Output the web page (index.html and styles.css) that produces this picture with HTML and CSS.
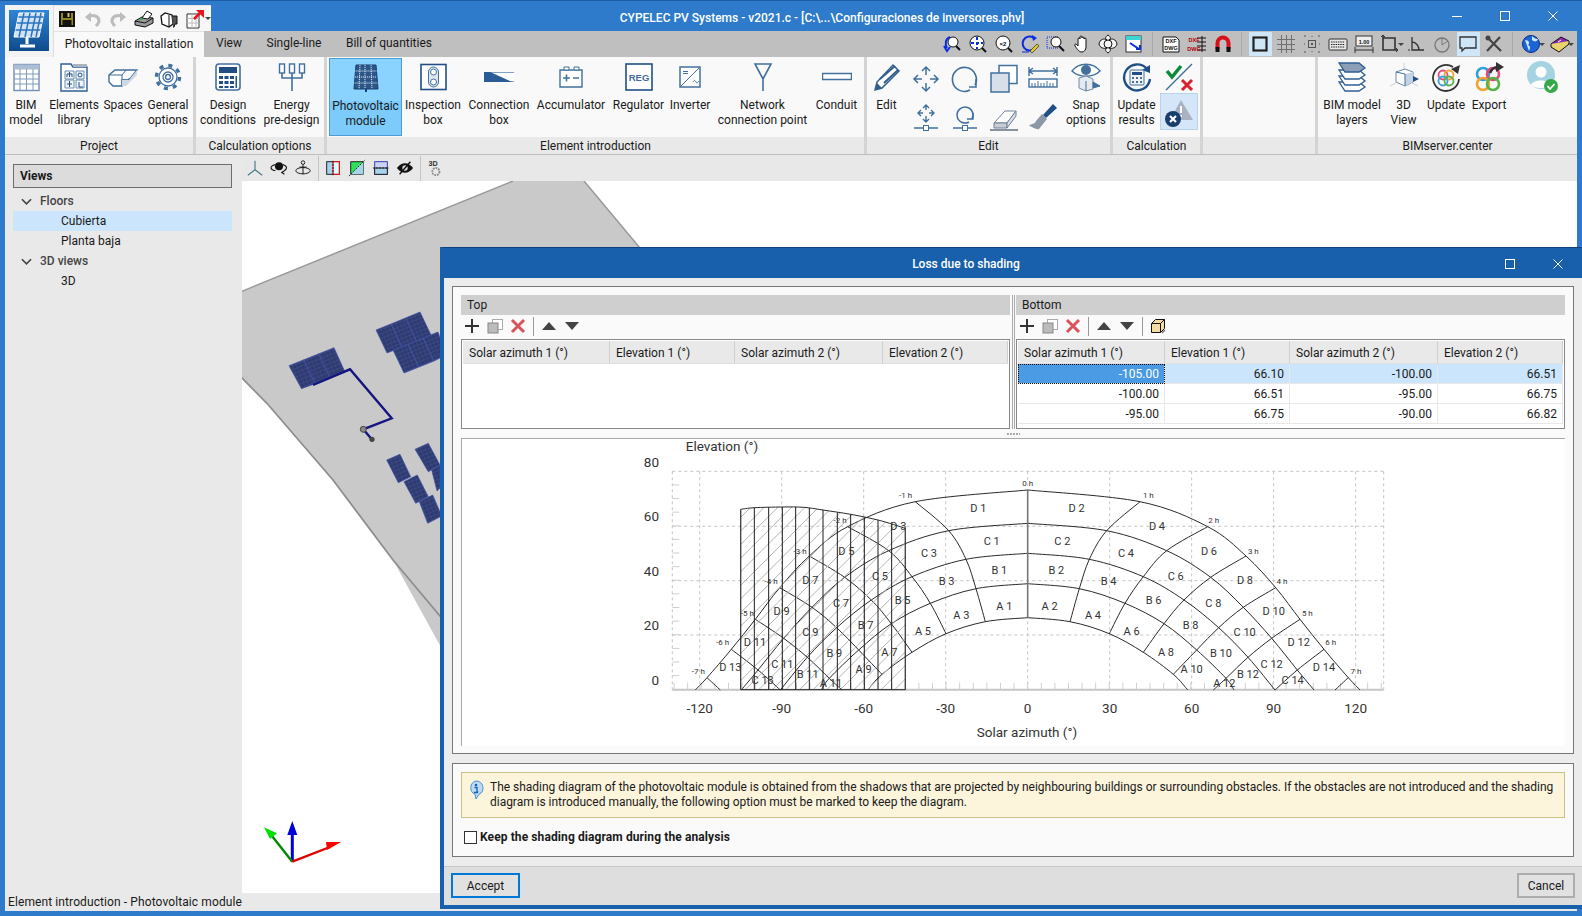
FILE: index.html
```html
<!DOCTYPE html>
<html lang="en">
<head>
<meta charset="utf-8">
<title>CYPELEC PV Systems</title>
<link rel="stylesheet" href="styles.css">
</head>
<body>
<div class="app">
  <div class="logo-box">
    <svg width="40" height="41" viewBox="0 0 40 41"><defs><linearGradient id="lg" x1="0" y1="0" x2="0" y2="1"><stop offset="0" stop-color="#2f86d6"/><stop offset="1" stop-color="#0e4a8c"/></linearGradient></defs><rect width="40" height="41" fill="url(#lg)"/><path d="M10 3h25l-5 24H5z" fill="#cfe3f5" stroke="#fff"/><path d="M6.500 20h25M8 13h25M9.500 7h25M15 3l-5 24M21 3l-5 24M27 3l-5 24M32 3l-5 24" stroke="#2b74bd" stroke-width="1.500"/><path d="M18 27v7M11 36h15" stroke="#fff" stroke-width="3"/></svg>
  </div>
  <header class="titlebar">
    <div class="qat">
      <svg class="t" viewBox="0 0 20 20"><path d="M3 3h14v14H3z" fill="#8f8a1e" stroke="#111" stroke-width="2"/><rect x="6" y="3" width="8" height="6" fill="#111"/><rect x="10.500" y="4" width="2" height="4" fill="#d8c84a"/><rect x="5.500" y="11" width="9" height="6" fill="#111"/></svg>
      <svg class="t" viewBox="0 0 20 20"><path d="M5 8c5-3 11-1 11 4 0 2-1 3-3 5" fill="none" stroke="#bcbcbc" stroke-width="3"/><path d="M8 3v10L2 8z" fill="#bcbcbc"/></svg>
      <svg class="t" viewBox="0 0 20 20"><path d="M15 8c-5-3-11-1-11 4 0 2 1 3 3 5" fill="none" stroke="#bcbcbc" stroke-width="3"/><path d="M12 3v10l6-5z" fill="#bcbcbc"/></svg>
      <svg class="t" viewBox="0 0 20 20"><path d="M1 12l7-4 11 1v5l-8 4-10-2z" fill="#999" stroke="#111"/><path d="M8 9l5-7 5 3-4 5z" fill="#fff" stroke="#111"/><path d="M1 12l10 2 8-5" fill="none" stroke="#111"/><path d="M6 10h3" stroke="#2bb04a" stroke-width="1.500"/></svg>
      <svg class="t" viewBox="0 0 20 20"><path d="M2 7l4-3 7 2 1 9-4 3-7-3z" fill="#fff" stroke="#111" stroke-width="1.300"/><path d="M10 6v12M13 7h5v8h-2l-1 3h-1" fill="#555" stroke="#111"/></svg>
      <svg class="t" viewBox="0 0 20 20"><path d="M2 5h12v14H2z" fill="#fff" stroke="#333"/><path d="M2 9.500h12M2 14h12M7 5v14M11 5v14" stroke="#bbb"/><path d="M9 10l6-6" stroke="#e8141c" stroke-width="2.500"/><path d="M11 1h8v8z" fill="#e8141c"/></svg>
      <span class="drop dk"></span>
    </div>
    <div class="win-title">CYPELEC PV Systems - v2021.c - [C:\...\Configuraciones de inversores.phv]</div>
    <div class="win-ctrl">
      <span class="wc"><svg width="12" height="12" viewBox="0 0 12 12"><path d="M1 6.500h10" stroke="#fff"/></svg></span>
      <span class="wc"><svg width="12" height="12" viewBox="0 0 12 12"><rect x="1.500" y="1.500" width="9" height="9" fill="none" stroke="#fff"/></svg></span>
      <span class="wc"><svg width="12" height="12" viewBox="0 0 12 12"><path d="M1.500 1.500l9 9M10.500 1.500l-9 9" stroke="#fff"/></svg></span>
    </div>
  </header>

  <nav class="tabs">
    <div class="tab active">Photovoltaic installation</div>
    <div class="tab view">View</div>
    <div class="tab single">Single-line</div>
    <div class="tab bill">Bill of quantities</div>
    <div class="tab-tools">
      <svg class="t" viewBox="0 0 20 20"><circle cx="11" cy="8" r="5" fill="#fff" stroke="#111"/><path d="M14 12l4 4" stroke="#111" stroke-width="2"/><path d="M8 3C3 5 3 10 5 14M2 12l3 5 3-4" fill="none" stroke="#0b2de0" stroke-width="2"/></svg>
      <svg class="t" viewBox="0 0 20 20"><circle cx="9" cy="9" r="7" fill="#fff" stroke="#111"/><path d="M9 3v12M3 9h12" stroke="#0b2de0" stroke-width="2" stroke-dasharray="3 2"/><path d="M14 14l4 4" stroke="#111" stroke-width="2"/></svg>
      <svg class="t" viewBox="0 0 20 20"><circle cx="9" cy="9" r="7" fill="#fff" stroke="#111"/><text x="9" y="12" class="svt" text-anchor="middle">×2</text><path d="M14 14l4 4" stroke="#111" stroke-width="2"/></svg>
      <svg class="t" viewBox="0 0 20 20"><path d="M15 5a7 7 0 1 0-1 10" fill="none" stroke="#0b2de0" stroke-width="2"/><path d="M12 1l5 3-4 3z" fill="#0b2de0"/><path d="M10 17l7-7 2 2-7 7z" fill="#e8c92c" stroke="#111" stroke-width=".6"/><path d="M2 18h7" stroke="#0b2de0"/></svg>
      <svg class="t" viewBox="0 0 20 20"><rect x="1" y="3" width="11" height="11" fill="none" stroke="#0b2de0" stroke-dasharray="1 1"/><circle cx="10" cy="8" r="5" fill="#fff" stroke="#111"/><path d="M13 12l5 5" stroke="#111" stroke-width="2"/></svg>
      <svg class="t" viewBox="0 0 20 20"><path d="M6 11V5a1 1 0 0 1 2 0V3a1 1 0 0 1 2 0v1a1 1 0 0 1 2 0v1a1 1 0 0 1 2 0v8c0 3-2 5-4 5-3 0-4-2-7-6-1-2 1-3 3 0z" fill="#fff" stroke="#111"/></svg>
      <svg class="t" viewBox="0 0 20 20"><path d="M10 1c3 2 3 4 1 5 3-2 7-1 8 4-1 4-5 5-8 4 2 1 2 3-1 5-3-2-3-4-1-5-3 1-7 0-8-4 1-5 5-6 8-4-2-1-2-3 1-5z" fill="#f4f4f4" stroke="#111"/><circle cx="10" cy="10" r="4" fill="none" stroke="#111"/></svg>
      <svg class="t" viewBox="0 0 20 20"><rect x="2" y="2" width="15" height="16" fill="#fff" stroke="#333"/><rect x="2" y="2" width="15" height="4" fill="#3ad6d6"/><path d="M6 9l9 6M12 15h4v-4" fill="none" stroke="#0b2de0" stroke-width="2"/></svg>
      <i class="tsep"></i>
      <svg class="t" viewBox="0 0 20 20"><path d="M2 3h13l3 3v12H2z" fill="#fff" stroke="#111"/><text x="10" y="9" class="svt sm" text-anchor="middle">DXF</text><text x="10" y="16" class="svt sm" text-anchor="middle">DWG</text></svg>
      <svg class="t" viewBox="0 0 20 20"><path d="M10 4h9M10 8h9M10 12h9M10 16h9M15 2v16" stroke="#111"/><text x="7" y="8" class="svt sm red" text-anchor="middle">DXF</text><text x="7" y="17" class="svt sm red" text-anchor="middle">DWG</text></svg>
      <svg class="t" viewBox="0 0 20 20"><path d="M4.500 15V9a5.500 5.500 0 0 1 11 0v6" fill="none" stroke="#d8101a" stroke-width="4"/><path d="M2.500 13h4v5h-4zM13.500 13h4v5h-4z" fill="#111"/></svg>
      <i class="tsep"></i>
      <span class="tw on"><svg class="t" viewBox="0 0 20 20"><rect x="3.500" y="3.500" width="13" height="13" fill="none" stroke="#222" stroke-width="2.200"/></svg></span>
      <svg class="t" viewBox="0 0 20 20"><path d="M5.500 1v18M10.500 1v18M15.500 1v18M1 5.500h18M1 10.500h18M1 15.500h18" stroke="#707070"/></svg>
      <svg class="t" viewBox="0 0 20 20"><rect x="6.500" y="6.500" width="7" height="7" fill="none" stroke="#555"/><circle cx="10" cy="10" r="1" fill="#333"/><path d="M2 2h2M16 2h2M2 18h2M16 18h2M2 10h1M17 10h1M10 2v1M10 17v1" stroke="#555"/></svg>
      <svg class="t" viewBox="0 0 20 20"><rect x="1" y="5" width="18" height="11" rx="1" fill="#e8e8e8" stroke="#333"/><path d="M3 8h14M3 10.500h14M3 13h14" stroke="#222" stroke-dasharray="1.500 .8"/></svg>
      <svg class="t" viewBox="0 0 20 20"><rect x="2" y="2" width="16" height="10" fill="#eee" stroke="#333"/><text x="10" y="10" class="svt sm" text-anchor="middle">1.00</text><path d="M1 16h18M1 13v6M19 13v6" stroke="#333"/></svg>
      <span class="tw drp"><svg class="t" viewBox="0 0 20 20"><path d="M3 1v15h15M3 4h12v12" fill="none" stroke="#333" stroke-width="1.600"/><path d="M1 3l2-2 2 2M16 14l2 2-2 2" fill="none" stroke="#333"/></svg><span class="drop"></span></span>
      <svg class="t" viewBox="0 0 20 20"><path d="M6 3v13h12M6 8c4 0 7 4 7 8" fill="none" stroke="#333" stroke-width="1.300"/><path d="M2 16h2" stroke="#333"/></svg>
      <svg class="t" viewBox="0 0 20 20"><circle cx="10" cy="11" r="7" fill="none" stroke="#777" stroke-width="1.300"/><path d="M10 11l6-4M10 11V4" stroke="#777"/></svg>
      <span class="tw on"><svg class="t" viewBox="0 0 20 20"><path d="M2 3h16v11H7l-3 3v-3H2z" fill="none" stroke="#333" stroke-width="1.300"/></svg></span>
      <svg class="t" viewBox="0 0 20 20"><path d="M4 4l13 13M16 3L3 17" stroke="#444" stroke-width="2.200"/><circle cx="4" cy="4" r="2.500" fill="#444"/></svg>
      <i class="tsep"></i>
      <span class="tw drp"><svg class="t" viewBox="0 0 20 20"><circle cx="10" cy="10" r="8.500" fill="#1c65d8" stroke="#0c2e80"/><path d="M4 6c4 0 5 3 3 5 3 1 2 4 1 6M11 2c2 2 3 3 6 3-1 3-4 3-6 1" fill="#cfe8ff"/></svg><span class="drop"></span></span>
      <span class="tw drp"><svg class="t" viewBox="0 0 20 20"><path d="M1 10l10-7 8 4-10 8z" fill="#8a2bb0" stroke="#111"/><path d="M1 10v3l8 5 10-8V7" fill="#e8d36c" stroke="#111"/><path d="M8 8l3-2" stroke="#fff"/></svg><span class="drop"></span></span>
    </div>
  </nav>

  <section class="ribbon">
    <div class="rgroup g-project">
      <div class="ritems">
        <div class="ri w42"><svg class="ic" viewBox="0 0 30 30"><rect x="3" y="2.500" width="25" height="26" fill="#fff" stroke="#6d8fb4" stroke-width="1.400"/><rect x="3" y="2.500" width="25" height="5" fill="#aebed2"/><path d="M3 12h25M3 17h25M3 22h25M9 7v21M15.500 7v21M22 7v21" stroke="#7d9bbc"/></svg><span>BIM<br>model</span></div>
        <div class="ri w54"><svg class="ic" viewBox="0 0 30 30"><path d="M2 29V2h10l2 3h14v24z" fill="#fff" stroke="#2f5f95" stroke-width="1.400"/><path d="M14 2h14v3H14z" fill="#aab4c0"/><path d="M6 9h9v8H6zM17 9h8v8h-8zM6 18h9v8H6zM17 18h8v8h-8z" fill="#f0f4f8" stroke="#6d8fb4"/><path d="M8 15v-3h5v3M10.500 10v5M19 13a2 2 0 1 1 4 0 2 2 0 1 1-4 0M8 22h5M10.500 19v6M20 20v5h4" fill="none" stroke="#224f83"/></svg><span>Elements<br>library</span></div>
        <div class="ri w44"><svg class="ic" viewBox="0 0 30 30"><path d="M1 13l6-5h22l-8 10h-7v6H5l-4-4z" fill="#fff" stroke="#3f6d9e" stroke-width="1.400"/><path d="M1 13h13v11M14 18l7 0M21 18v-2M14 13l4-5" fill="none" stroke="#3f6d9e"/><path d="M14 18h7l8-10v5l-11 11h-4z" fill="#cfd9e6"/></svg><span>Spaces</span></div>
        <div class="ri w46"><svg class="ic" viewBox="0 0 30 30"><circle cx="15" cy="15" r="11.500" fill="none" stroke="#41709f" stroke-width="3.500" stroke-dasharray="4 5.030"/><circle cx="15" cy="15" r="9" fill="#fff" stroke="#41709f" stroke-width="1.300"/><circle cx="15" cy="15" r="5" fill="none" stroke="#41709f" stroke-width="1.300"/><circle cx="15" cy="15" r="2.500" fill="none" stroke="#41709f" stroke-width="1.300"/></svg><span>General<br>options</span></div>
      </div>
      <div class="rlabel">Project</div>
    </div>
    <div class="rgroup g-calcopt">
      <div class="ritems">
        <div class="ri w64"><svg class="ic" viewBox="0 0 30 30"><rect x="3" y="2" width="24" height="26" rx="3" fill="#fff" stroke="#41709f" stroke-width="1.600"/><rect x="6" y="5" width="18" height="6" fill="#204f86"/><path d="M6 14h4v3H6zM11.500 14h4v3h-4zM17 14h4v3h-4zM6 19h4v3H6zM11.500 19h4v3h-4zM17 19h4v3h-4zM6 24h4v2H6zM11.500 24h4v2h-4zM17 24h4v2h-4zM22.500 14H24v12h-1.500z" fill="#204f86"/></svg><span>Design<br>conditions</span></div>
        <div class="ri w63"><svg class="ic" viewBox="0 0 30 30"><path d="M15 29V16M5 11v5h20v-5M15 11v5" fill="none" stroke="#41709f" stroke-width="1.600"/><rect x="2.500" y="2" width="5" height="9" fill="#fff" stroke="#41709f" stroke-width="1.400"/><rect x="12.500" y="2" width="5" height="9" fill="#fff" stroke="#41709f" stroke-width="1.400"/><rect x="22.500" y="2" width="5" height="9" fill="#fff" stroke="#41709f" stroke-width="1.400"/></svg><span>Energy<br>pre-design</span></div>
      </div>
      <div class="rlabel">Calculation options</div>
    </div>
    <div class="rgroup g-elem">
      <div class="ritems">
        <div class="ri w73 sel"><svg class="ic" viewBox="0 0 30 30"><path d="M5 2h20l2 24H3z" fill="#2d5688" stroke="#173e6d"/><path d="M4.500 8h21M4 14h22M3.500 20h23M9 2L8 26M14 2v24M20 2l1 24" stroke="#d3e4f4" stroke-dasharray="1.200 .8"/><path d="M15 26v3" stroke="#17406f" stroke-width="2"/></svg><span>Photovoltaic<br>module</span></div>
        <div class="ri w62"><svg class="ic" viewBox="0 0 30 30"><rect x="3" y="2.500" width="25" height="25" fill="#fff" stroke="#204f86" stroke-width="1.600"/><rect x="10.500" y="5" width="10" height="20" rx="5" fill="#dfe6ee" stroke="#41709f"/><circle cx="15.500" cy="10" r="3" fill="#fff" stroke="#41709f"/><circle cx="15.500" cy="20" r="3" fill="#fff" stroke="#41709f"/></svg><span>Inspection<br>box</span></div>
        <div class="ri w70"><svg class="ic" viewBox="0 0 30 30"><rect x="0.500" y="10.500" width="30" height="9" fill="#fff" stroke="#7fa0c4"/><path d="M0 10v10h28L6 10z" fill="#2a5d98"/></svg><span>Connection<br>box</span></div>
        <div class="ri w74"><svg class="ic" viewBox="0 0 30 30"><path d="M4 8h22v17H4z" fill="#fff" stroke="#41709f" stroke-width="1.400"/><path d="M8 5h5v3H8zM18 5h5v3h-5z" fill="#fff" stroke="#41709f"/><path d="M7 16h7M10.500 12.500v7M17 16h6" stroke="#41709f" stroke-width="1.600"/></svg><span>Accumulator</span></div>
        <div class="ri w61"><svg class="ic" viewBox="0 0 30 30"><rect x="2" y="2" width="26" height="26" fill="#fff" stroke="#204f86" stroke-width="1.600"/><text x="15" y="18.500" class="svt reg" text-anchor="middle">REG</text></svg><span>Regulator</span></div>
        <div class="ri w42"><svg class="ic" viewBox="0 0 30 30"><rect x="5" y="5" width="20" height="20" fill="#fff" stroke="#41709f" stroke-width="1.500"/><path d="M6 24L24 6M8 9.500h5M8 11.500h5M18 20c1-2 2-2 3 0s2 0 3-1" fill="none" stroke="#41709f"/></svg><span>Inverter</span></div>
        <div class="ri w103"><svg class="ic" viewBox="0 0 30 30"><path d="M7 2h16l-8 15zM15 17v12" fill="none" stroke="#41709f" stroke-width="1.600"/></svg><span>Network<br>connection point</span></div>
        <div class="ri w45"><svg class="ic" viewBox="0 0 30 30"><rect x="0.500" y="11.500" width="29" height="6" fill="#fff" stroke="#41709f" stroke-width="1.500"/></svg><span>Conduit</span></div>
      </div>
      <div class="rlabel">Element introduction</div>
    </div>
    <div class="rgroup g-edit">
      <div class="ritems">
        <div class="ri w39"><svg class="ic" viewBox="0 0 30 30"><path d="M3 28l2-8L21 3l6 6L10 26z" fill="#fff" stroke="#31608f" stroke-width="1.500"/><path d="M3 28l2-7 5 5z" fill="#31608f"/><path d="M8 17L23 4M12 21L26 8" stroke="#31608f" stroke-width="2"/></svg><span>Edit</span></div>
        <div class="egrid">
          <svg class="ic" viewBox="0 0 30 30"><path d="M15 3v24M3 15h24M11 7l4-4 4 4M11 23l4 4 4-4M7 11l-4 4 4 4M23 11l4 4-4 4" fill="none" stroke="#41709f" stroke-width="1.500"/><rect x="11" y="11" width="8" height="8" fill="#f9f9f9"/></svg>
          <svg class="ic" viewBox="0 0 30 30"><path d="M20 26a12 12 0 1 1 5-5" fill="none" stroke="#41709f" stroke-width="1.600"/><path d="M26 15v8h-7" fill="none" stroke="#41709f" stroke-width="1.500"/></svg>
          <svg class="ic" viewBox="0 0 30 30"><rect x="10" y="1.500" width="18" height="18" fill="#fff" stroke="#41709f" stroke-width="1.500"/><rect x="2" y="9" width="18" height="19" fill="#d9dfe8" stroke="#41709f" stroke-width="1.500"/></svg>
          <svg class="ic" viewBox="0 0 30 30"><path d="M1 7h28M1 3v9M29 3v9M5 4L1 7l4 3M25 4l4 3-4 3" fill="none" stroke="#41709f" stroke-width="1.400"/><rect x="1" y="15" width="28" height="8" fill="#fff" stroke="#41709f" stroke-width="1.400"/><path d="M4 19v4M7 19v4M10 17v6M13 19v4M16 19v4M19 17v6M22 19v4M25 19v4" stroke="#41709f"/></svg>
          <svg class="ic" viewBox="0 0 30 30"><path d="M15 3v17M7 11h16M12 6l3-3 3 3M12 17l3 3 3-3M10 8l-3 3 3 3M20 8l3 3-3 3M3 26h24" fill="none" stroke="#41709f" stroke-width="1.400"/><rect x="12" y="8" width="6" height="6" fill="#f9f9f9"/><rect x="12.500" y="23.500" width="5" height="5" fill="#fff" stroke="#41709f"/></svg>
          <svg class="ic" viewBox="0 0 30 30"><path d="M19 20a8 8 0 1 1 3-3" fill="none" stroke="#41709f" stroke-width="1.500"/><path d="M23 11v6h-6M3 26h24" fill="none" stroke="#41709f" stroke-width="1.400"/><rect x="12.500" y="23.500" width="5" height="5" fill="#fff" stroke="#41709f"/></svg>
          <svg class="ic" viewBox="0 0 30 30"><path d="M5 21L16 9h11l-9 12z" fill="#fff" stroke="#6f8096"/><path d="M5 21h13v5H5z" fill="#c9ced6" stroke="#6f8096"/><path d="M18 21l9-12v5l-9 12z" fill="#dde2e8" stroke="#6f8096"/><path d="M1 28h28" stroke="#8792a1" stroke-width="2"/></svg>
          <svg class="ic" viewBox="0 0 30 30"><path d="M15 13L25 2l4 4-11 10z" fill="#204f86"/><path d="M14 12l5 5-8 10c-2 1-8-2-10-4 3-1 6-1 7-4z" fill="#8c98a8"/></svg>
        </div>
        <div class="ri w48"><svg class="ic" viewBox="0 0 30 30"><path d="M1 9c7-9 21-9 28 0-7 7-21 7-28 0z" fill="#fff" stroke="#41709f" stroke-width="1.400"/><circle cx="15" cy="8" r="5" fill="#41709f"/><path d="M8 16l7-2 7 3v10l-7 2-7-3z" fill="#e5eaf0" stroke="#6f8aa8"/><path d="M15 19v10M22 20l7 4-7 2z" fill="#41709f" stroke="#41709f"/></svg><span>Snap<br>options</span></div>
      </div>
      <div class="rlabel">Edit</div>
    </div>
    <div class="rgroup g-calc">
      <div class="ritems">
        <div class="ri w47"><svg class="ic" viewBox="0 0 30 30"><path d="M25 7a13 13 0 1 0 3 10" fill="none" stroke="#204f86" stroke-width="2.400"/><path d="M20 8l8-5v8z" fill="#204f86"/><rect x="8" y="8" width="14" height="15" rx="1" fill="#f2f2f2" stroke="#41709f"/><path d="M10 10h10v3H10z" fill="#204f86"/><path d="M10 15h2v2h-2zM14 15h2v2h-2zM18 15h2v2h-2zM10 19h2v2h-2zM14 19h2v2h-2zM18 19h2v2h-2z" fill="#41709f"/></svg><span>Update<br>results</span></div>
        <div class="ecol">
          <svg class="ic" viewBox="0 0 30 30"><path d="M28 2L2 28" stroke="#41709f" stroke-width="1.500"/><path d="M3 9l5 6L17 4" fill="none" stroke="#0c8a3c" stroke-width="3.500"/><path d="M18 18l10 10M28 18L18 28" stroke="#d8202c" stroke-width="3"/></svg>
          <span class="warn"><svg class="ic" viewBox="0 0 30 30"><path d="M17 3l12 20H6z" fill="#a9b2c1"/><path d="M17 9v7M17 18v2" stroke="#fff" stroke-width="2"/><circle cx="9" cy="22" r="8" fill="#173e6d"/><path d="M6 19l6 6M12 19l-6 6" stroke="#fff" stroke-width="2.200"/></svg></span>
        </div>
      </div>
      <div class="rlabel">Calculation</div>
    </div>
    <div class="rgroup g-blank">
      <div class="ritems"></div>
      <div class="rlabel">&nbsp;</div>
    </div>
    <div class="rgroup g-bim">
      <div class="ritems">
        <div class="ri w68"><svg class="ic" viewBox="0 0 30 30"><path d="M2 20h20l6 5-6 4H8z" fill="#fff" stroke="#2f5f95" stroke-width="1.300"/><path d="M2 14h20l6 5-6 4H8z" fill="#fff" stroke="#2f5f95" stroke-width="1.300"/><path d="M2 8h20l6 5-6 4H8z" fill="#fff" stroke="#2f5f95" stroke-width="1.300"/><path d="M2 1h20l6 5-6 4H8z" fill="#8d9fb6" stroke="#2f5f95" stroke-width="1.300"/></svg><span>BIM model<br>layers</span></div>
        <div class="ri w35"><svg class="ic wide" viewBox="0 0 30 30"><path d="M15 1v6M1 24l6-3M29 24l-6-3" stroke="#cfcfcf"/><path d="M7 10l9-3 8 3v10l-8 4-9-4z" fill="#fff" stroke="#6f8aa8"/><path d="M16 12l8-2v10l-8 4z" fill="#c4d3e3"/><path d="M7 10l9 2v12" fill="none" stroke="#41709f"/><path d="M24 14l6 3-6 3z" fill="#204f86"/></svg><span>3D<br>View</span></div>
        <div class="ri w50"><svg class="ic" viewBox="0 0 30 30"><path d="M22 5A13 13 0 1 0 28 17" fill="none" stroke="#333" stroke-width="1.800"/><path d="M20 7l9-4-2 9z" fill="#333"/><circle cx="12" cy="13" r="4.500" fill="none" stroke="#e44a7c" stroke-width="1.800"/><circle cx="18" cy="13" r="4.500" fill="none" stroke="#f2a22e" stroke-width="1.800"/><circle cx="12" cy="19" r="4.500" fill="none" stroke="#3c9fdc" stroke-width="1.800"/><circle cx="18" cy="19" r="4.500" fill="none" stroke="#55b34a" stroke-width="1.800"/></svg><span>Update</span></div>
        <div class="ri w36"><svg class="ic" viewBox="0 0 30 30"><circle cx="9" cy="12" r="6" fill="none" stroke="#2f9fe0" stroke-width="2.600"/><circle cx="19" cy="12" r="6" fill="none" stroke="#e44a7c" stroke-width="2.600"/><circle cx="9" cy="22" r="6" fill="none" stroke="#f2a22e" stroke-width="2.600"/><circle cx="19" cy="22" r="6" fill="none" stroke="#55b34a" stroke-width="2.600"/><path d="M16 11c2-5 6-6 8-6" fill="none" stroke="#333" stroke-width="2.500"/><path d="M22 0l8 5-8 5z" fill="#333"/></svg><span>Export</span></div>
        <div class="ri w66"><svg class="ic lg" viewBox="0 0 34 34"><circle cx="16" cy="15" r="14" fill="#a6d3e2"/><circle cx="16" cy="12" r="5.500" fill="#fff"/><path d="M6 25c2-6 18-6 20 0-3 4-17 4-20 0z" fill="#fff"/><circle cx="26" cy="26" r="7" fill="#35a84a"/><path d="M22.500 26l2.500 3 4.500-5" fill="none" stroke="#fff" stroke-width="1.800"/></svg></div>
      </div>
      <div class="rlabel">BIMserver.center</div>
    </div>
  </section>

  <main class="workspace">
    <aside class="side">
      <div class="side-head">Views</div>
      <ul class="tree">
        <li class="node"><svg class="chev" viewBox="0 0 12 8"><path d="M1 1l5 5 5-5" fill="none" stroke="#444" stroke-width="1.800"/></svg>Floors</li>
        <li class="leaf cur">Cubierta</li>
        <li class="leaf">Planta baja</li>
        <li class="node"><svg class="chev" viewBox="0 0 12 8"><path d="M1 1l5 5 5-5" fill="none" stroke="#444" stroke-width="1.800"/></svg>3D views</li>
        <li class="leaf">3D</li>
      </ul>
    </aside>
    <div class="stage">
      <div class="vbar">
        <svg class="v" viewBox="0 0 20 20"><path d="M10 2v10M10 12l-8 6M10 12l8 6" stroke="#4a7a8c" fill="none" stroke-width="1.300"/></svg>
        <svg class="v" viewBox="0 0 20 20"><circle cx="10" cy="8" r="4.500" fill="#111"/><path d="M6 6c-7 2-6 6 0 7M14 6c6 2 5 5 2 7M16 13l-3 2 3 2" fill="none" stroke="#111" stroke-width="1.200"/></svg>
        <svg class="v" viewBox="0 0 20 20"><circle cx="10" cy="4" r="2" fill="none" stroke="#111"/><path d="M10 6v11M6 9h8" stroke="#111"/><ellipse cx="10" cy="13" rx="8" ry="3.500" fill="none" stroke="#111"/></svg>
        <i class="vsep"></i>
        <svg class="v" viewBox="0 0 20 20"><rect x="3" y="3" width="14" height="14" fill="#a9d3ea" stroke="#111"/><rect x="10" y="3" width="7" height="14" fill="#dff" stroke="#e01010" stroke-width="1.300"/><path d="M10 2v16" stroke="#111" stroke-dasharray="2 1.500"/></svg>
        <svg class="v" viewBox="0 0 20 20"><path d="M3 3h14v14H3z" fill="#2fe05c" stroke="#111"/><path d="M3 17L17 3v14z" fill="#a9d3ea"/><path d="M1 19L19 1" stroke="#111" stroke-dasharray="2 1.500"/></svg>
        <svg class="v" viewBox="0 0 20 20"><rect x="3" y="3" width="14" height="14" fill="#c9d4ef" stroke="#2828b0"/><rect x="3" y="10" width="14" height="7" fill="#a9d3ea" stroke="#111"/><path d="M1 10h18" stroke="#111" stroke-dasharray="2 1.500"/></svg>
        <svg class="v" viewBox="0 0 20 20"><path d="M1 10c5-7 13-7 18 0-5 7-13 7-18 0z" fill="#111"/><circle cx="10" cy="10" r="3" fill="#ddd"/><path d="M4 17L16 3" stroke="#111" stroke-width="1.500"/></svg>
        <i class="vsep"></i>
        <svg class="v" viewBox="0 0 20 20"><text x="8" y="8" class="svt b7" text-anchor="middle">3D</text><circle cx="11" cy="14" r="4" fill="none" stroke="#888" stroke-width="2" stroke-dasharray="2 1"/></svg>
      </div>
      <div class="canvas">
        <svg class="scene" viewBox="242 181 1335 712">
          <defs>
            <pattern id="pv" width="4" height="4" patternUnits="userSpaceOnUse" patternTransform="rotate(-22)"><rect width="4" height="4" fill="#2c3a70"/><path d="M0 .5h4M2 0v4" stroke="#47548f" stroke-width=".5"/></pattern>
          </defs>
          <path d="M240 292L513 181H584L700 320V700H470L393 560 333 480 266.700 403 240 376z" fill="#c9c9c9"/>
          <path d="M240 292L513 181M584 181L660 272" fill="none" stroke="#999" stroke-width="1.500"/>
          <path d="M240 376L266.700 403 333 480 393 560 445 622" fill="none" stroke="#8e8e8e" stroke-width="1.800"/>
          <g fill="url(#pv)" stroke="#3f4fa8" stroke-width=".7">
            <path d="M289 365.700l15-6 11 24-13.500 5z"/><path d="M304 359.700l15-6 11 24-15 6z"/><path d="M319 353.700l15-6 11 24.300-15 5.700z"/>
            <path d="M376 330l15-6 11 23-15 6z"/><path d="M391 324l14.500-6 11 23-14.500 6z"/><path d="M405.500 318l14.500-6 11 23-14.500 6z"/>
            <path d="M393 350l15-6 11 23-15 6z"/><path d="M408 344l15-6 11 23-15 6z"/><path d="M423 338l15-6 8 23-12 6z"/>
            <path d="M386.700 460l13.300-5.700 10.700 22.400-12.400 6z"/><path d="M404 481.700l13.300-6.700 11 21.700-12.600 6.600z"/><path d="M419.300 501.700l13.400-6.700 9 21-14 7.300z"/>
            <path d="M415 449.300l13.300-6 11.700 21.700-11.700 6.700z"/><path d="M431.700 470l8.300-5v23l-3 3z"/>
          </g>
          <path d="M313 385L350 369.300 391.700 418.300 363.300 429.300 371.700 439.300" fill="none" stroke="#15157f" stroke-width="2.400"/>
          <circle cx="363.300" cy="429.300" r="3" fill="#888" stroke="#444"/>
          <circle cx="372" cy="439.300" r="2.600" fill="#444"/>
          <path d="M292.300 861.700V830" stroke="#0000d8" stroke-width="3"/><path d="M292.300 821l5 14h-10z" fill="#0000d8"/>
          <path d="M292.300 861.700L272 836" stroke="#008a00" stroke-width="2.400"/><path d="M264 827.300l13 6-7 5.700z" fill="#00e000"/>
          <path d="M292.300 861.700L330 847" stroke="#e00000" stroke-width="2.400"/><path d="M341 842l-14 8-1-8z" fill="#ff0000"/>
        </svg>
      </div>
    </div>
  </main>
  <footer class="status">Element introduction - Photovoltaic module</footer>

  <section class="dialog">
    <div class="dlg-title">
      <span class="dlg-name">Loss due to shading</span>
      <span class="dc"><svg width="12" height="12" viewBox="0 0 12 12"><rect x="1.500" y="1.500" width="9" height="9" fill="none" stroke="#fff"/></svg></span>
      <span class="dc"><svg width="12" height="12" viewBox="0 0 12 12"><path d="M1.500 1.500l9 9M10.500 1.500l-9 9" stroke="#fff"/></svg></span>
    </div>
    <div class="dlg-body">
      <div class="panel main-panel">
        <div class="pane-row">
          <div class="pane">
            <div class="pane-head">Top</div>
            <div class="pane-tools">
              <svg class="b" viewBox="0 0 16 16"><path d="M8 1v14M1 8h14" stroke="#333" stroke-width="2"/></svg>
              <svg class="b" viewBox="0 0 16 16"><rect x="5.500" y="1.500" width="10" height="10" fill="#fff" stroke="#aaa"/><rect x="1" y="5" width="10" height="10" fill="#bbb" stroke="#888"/></svg>
              <svg class="b" viewBox="0 0 16 16"><path d="M2 2l12 12M14 2L2 14" stroke="#d8545a" stroke-width="3"/></svg>
              <i class="bsep"></i>
              <svg class="b" viewBox="0 0 16 16"><path d="M1 12L8 4l7 8z" fill="#444"/></svg>
              <svg class="b" viewBox="0 0 16 16"><path d="M1 4l7 8 7-8z" fill="#444"/></svg>
            </div>
            <div class="grid-box">
              <div class="grid">
                <div class="gh">Solar azimuth 1 (°)</div><div class="gh">Elevation 1 (°)</div><div class="gh">Solar azimuth 2 (°)</div><div class="gh">Elevation 2 (°)</div>
              </div>
            </div>
          </div>
          <div class="vsplit"></div>
          <div class="pane">
            <div class="pane-head">Bottom</div>
            <div class="pane-tools">
              <svg class="b" viewBox="0 0 16 16"><path d="M8 1v14M1 8h14" stroke="#333" stroke-width="2"/></svg>
              <svg class="b" viewBox="0 0 16 16"><rect x="5.500" y="1.500" width="10" height="10" fill="#fff" stroke="#aaa"/><rect x="1" y="5" width="10" height="10" fill="#bbb" stroke="#888"/></svg>
              <svg class="b" viewBox="0 0 16 16"><path d="M2 2l12 12M14 2L2 14" stroke="#d8545a" stroke-width="3"/></svg>
              <i class="bsep"></i>
              <svg class="b" viewBox="0 0 16 16"><path d="M1 12L8 4l7 8z" fill="#444"/></svg>
              <svg class="b" viewBox="0 0 16 16"><path d="M1 4l7 8 7-8z" fill="#444"/></svg>
              <i class="bsep"></i>
              <svg class="b" viewBox="0 0 16 16"><path d="M1.500 5.500l4-4h9v9l-4 4h-9z" fill="#f6dca0" stroke="#111"/><path d="M1.500 5.500h9v9M10.500 5.500l4-4" fill="none" stroke="#111"/><path d="M12 15l3-3" stroke="#777" stroke-width="1.500"/></svg>
            </div>
            <div class="grid-box">
              <div class="grid">
                <div class="gh">Solar azimuth 1 (°)</div><div class="gh">Elevation 1 (°)</div><div class="gh">Solar azimuth 2 (°)</div><div class="gh">Elevation 2 (°)</div>
                <div class="gc focus">-105.00</div><div class="gc hl">66.10</div><div class="gc hl">-100.00</div><div class="gc hl">66.51</div>
                <div class="gc">-100.00</div><div class="gc">66.51</div><div class="gc">-95.00</div><div class="gc">66.75</div>
                <div class="gc">-95.00</div><div class="gc">66.75</div><div class="gc">-90.00</div><div class="gc">66.82</div>
              </div>
            </div>
          </div>
        </div>
        <div class="hsplit"><i></i></div>
        <div class="chart" id="chart"></div>
      </div>
      <div class="panel opts-panel">
        <div class="info">
          <svg class="info-ic" viewBox="0 0 16 20"><path d="M8 1a7 7 0 0 1 3 13.300L8 19l-1-4.800A7 7 0 0 1 8 1z" fill="#bcdcf5" stroke="#4a90d0"/><circle cx="8" cy="5" r="1.300" fill="#1a5fae"/><path d="M6.500 7.500H9V12h1.200M6 12.500h4" fill="none" stroke="#1a5fae" stroke-width="1.300"/></svg>
          <p>The shading diagram of the photovoltaic module is obtained from the shadows that are projected by neighbouring buildings or surrounding obstacles. If the obstacles are not introduced and the shading<br>diagram is introduced manually, the following option must be marked to keep the diagram.</p>
        </div>
        <label class="check"><span class="box"></span>Keep the shading diagram during the analysis</label>
      </div>
    </div>
    <div class="dlg-foot">
      <button class="btn primary" type="button">Accept</button>
      <button class="btn" type="button">Cancel</button>
    </div>
  </section>
</div>
<script src="chart.js"></script>
</body>
</html>
```
FILE: styles.css
```css
* { box-sizing: border-box; }
html, body { margin: 0; padding: 0; }
body { width: 1582px; height: 916px; overflow: hidden; font: 12px/15px Roboto, "Liberation Sans", sans-serif; color: #1a1a1a; }
.app { position: relative; width: 1582px; height: 916px; background: #2e7bcb; padding: 0 5px 5px; display: flex; flex-direction: column; border-top: 1px solid #1a5ca6; overflow: hidden; }

.logo-box { position: absolute; left: 5px; top: 4px; width: 49px; height: 52px; background: #f3f3f3; padding: 5px 4px; z-index: 3; border-right: 1px solid #ddd; }
.logo-box svg { display: block; }

.titlebar { height: 30px; display: flex; align-items: flex-end; flex: none; }
.qat { margin-left: 49px; width: 157px; height: 26px; background: #f7f7f7; display: flex; align-items: center; padding: 0 0 0 3px; gap: 5.500px; border-top: 1px solid #e6e6e6; }
.t { width: 20px; height: 20px; flex: none; display: block; }
.drop { width: 0; height: 0; border-left: 3px solid transparent; border-right: 3px solid transparent; border-top: 3px solid #444; display: inline-block; }
.drop.dk { margin-left: -5px; }
.win-title { flex: 1; align-self: center; text-align: center; color: #fff; font-weight: 500; font-size: 12px; padding-top: 5px; }
.win-ctrl { width: 144px; height: 30px; display: flex; align-items: center; }
.wc { width: 48px; display: flex; justify-content: center; }

.tabs { height: 26px; background: #bfbfbf; display: flex; align-items: center; flex: none; padding-left: 49px; }
.tab { height: 26px; line-height: 24px; text-align: center; }
.tab.active { width: 150px; background: #f9f9f9; border-top: 1px solid #e2e2e2; }
.tab.view { width: 50px; }
.tab.single { width: 80px; }
.tab.bill { width: 110px; }
.tab-tools { margin-left: 498px; display: flex; align-items: center; height: 26px; gap: 6px; }
.tsep { width: 1px; height: 24px; background: #a9a9a9; margin: 0 2px; flex: none; }
.tw { display: flex; align-items: center; justify-content: center; height: 24px; width: 20px; flex: none; }
.tw.on { width: 23px; margin: 0 -1.500px; background: #cfe5f8; }
.tw.drp { width: 20px; position: relative; }
.tw.drp .drop { position: absolute; right: -4px; top: 11px; }
.tw.drp + .tw.drp { margin-left: 3px; }

.ribbon { height: 98px; display: flex; gap: 3px; background: #d4d4d4; flex: none; border-bottom: 1px solid #bdbdbd; }
.rgroup { display: flex; flex-direction: column; background: #f9f9f9; flex: none; }
.g-project { width: 188px; }
.g-calcopt { width: 128px; }
.g-elem { width: 537px; padding-left: 2px; }
.g-edit { width: 243px; }
.g-calc { width: 87px; }
.g-blank { width: 112px; }
.g-bim { width: 259px; }
.ritems { height: 80px; display: flex; flex: none; }
.rlabel { height: 17px; line-height: 19px; background: #e9e9e9; text-align: center; }
.g-elem .rlabel { margin-left: -2px; }
.ri { display: flex; flex-direction: column; align-items: center; text-align: center; padding-top: 5px; flex: none; height: 80px; white-space: nowrap; }
.ri.sel { background: linear-gradient(#8ad2ff 0 55%, #7ccbfb 55%); border: 1px solid #4b9bd6; padding-top: 4px; margin-top: 1px; height: 78px; }
.ri span { display: block; margin-top: 6px; }
.ic { width: 30px; height: 30px; display: block; flex: none; }
.ic.lg { width: 34px; height: 34px; margin: -2px 0 0 4px; }
.w35 { width: 35px; } .w36 { width: 36px; } .w39 { width: 39px; } .w42 { width: 42px; } .w44 { width: 44px; } .w45 { width: 45px; } .w46 { width: 46px; } .w47 { width: 47px; } .w48 { width: 48px; } .w50 { width: 50px; } .w54 { width: 54px; } .w61 { width: 61px; } .w62 { width: 62px; } .w63 { width: 63px; } .w64 { width: 64px; } .w66 { width: 66px; } .w68 { width: 68px; } .w70 { width: 70px; } .w73 { width: 73px; } .w74 { width: 74px; } .w103 { width: 103px; }
.egrid { display: grid; grid-template-columns: repeat(4, 39px); grid-template-rows: 38px 38px; place-items: center; width: 156px; padding-top: 3px; height: 80px; }
.ecol { width: 38px; display: flex; flex-direction: column; align-items: center; padding-top: 5px; }
.ecol .warn { width: 38px; height: 37px; margin-top: 1px; background: #d4e6f7; border: 1px solid #b8d4ec; display: flex; align-items: center; justify-content: center; }
.svt { font: 700 6px "Liberation Sans", sans-serif; fill: #111; }
.svt.sm { font-size: 5.500px; }
.svt.red { fill: #b00000; }
.svt.reg { font-size: 9.500px; fill: #3f6d9e; }
.svt.b7 { font-size: 8px; fill: #333; }

.workspace { flex: 1; display: flex; min-height: 0; }
.side { width: 237px; background: #e9e9e9; padding: 9px 10px 0 8px; flex: none; }
.side-head { height: 24px; line-height: 22px; background: #dcdcdc; border: 1px solid #6e6e6e; padding-left: 6px; font-weight: 700; }
.tree { list-style: none; margin: 3px 0 0; padding: 0; }
.tree li { height: 20px; line-height: 20px; }
.node { position: relative; padding-left: 27px; color: #444; font-weight: 500; }
.chev { position: absolute; left: 8px; top: 7px; width: 11px; height: 8px; }
.leaf { padding-left: 48px; }
.leaf.cur { background: #cbe6fc; }
.stage { flex: 1; display: flex; flex-direction: column; min-width: 0; }
.vbar { height: 26px; background: #e8e8e8; display: flex; align-items: center; padding-left: 1px; flex: none; }
.v { width: 18px; height: 18px; margin: 0 3px; flex: none; }
.vsep { width: 1px; height: 25px; background: #c4c4c4; margin: 0 2.500px; flex: none; }
.canvas { flex: 1; background: #fff; min-height: 0; }
.scene { display: block; width: 1335px; height: 712px; }
.status { height: 18px; line-height: 18px; background: #e9e9e9; padding-left: 3px; flex: none; letter-spacing: .1px; }

.dialog { position: absolute; left: 440px; top: 246px; width: 1142px; height: 662px; background: #ececec; border-left: 4px solid #1860ab; border-bottom: 4px solid #1860ab; border-top: 1px solid #0f3f7c; display: flex; flex-direction: column; z-index: 5; }
.dlg-title { height: 30px; margin-left: -4px; background: #1860ab; color: #fff; font-weight: 500; display: flex; align-items: center; flex: none; padding: 2px 18px 0 0; gap: 36px; }
.dlg-name { flex: 1; text-align: center; padding-left: 24px; }
.dc { width: 12px; display: flex; }
.dlg-body { flex: 1; padding: 8px 8px 9px; display: flex; flex-direction: column; gap: 9px; min-height: 0; }
.panel { background: #fafafa; border: 1px solid #777; }
.main-panel { height: 468px; padding: 8px 8px 0; flex: none; }
.pane-row { display: flex; height: 134px; }
.pane { width: 549px; flex: none; display: flex; flex-direction: column; }
.vsplit { border-left: 1px solid #aaa; border-right: 1px solid #aaa; margin: 0 1px 0 2px; width: 3px; }
.pane-head { height: 20px; line-height: 20px; background: #cfcfcf; padding-left: 6px; flex: none; }
.pane-tools { height: 24px; display: flex; align-items: center; padding: 0 0 2px 3px; flex: none; gap: 7px; }
.b { width: 16px; height: 16px; flex: none; }
.bsep { width: 1px; height: 19px; background: #999; flex: none; }
.grid-box { flex: 1; border: 1px solid #888; background: #fff; padding: 1px; min-height: 0; }
.grid { display: grid; grid-template-columns: 147px 125px 148px 125px; grid-template-rows: 23px; grid-auto-rows: 20px; }
.gh { height: 23px; background: #e9e9e9; border-right: 1px solid #d0d0d0; line-height: 24px; padding-left: 6px; border-bottom: 1px solid #e0e0e0; }
.gc { text-align: right; padding-right: 5px; line-height: 20px; border-right: 1px solid #e8e8e8; border-bottom: 1px solid #e8e8e8; }
.gc.hl { background: #cbe6fc; }
.gc.focus { background: #4a9be3; color: #fff; outline: 1px dotted #111; outline-offset: -1px; }
.hsplit { height: 9px; display: flex; justify-content: center; align-items: center; }
.hsplit i { width: 13px; height: 2px; background: repeating-linear-gradient(90deg, #aaa 0 2px, transparent 2px 3px); }
.chart { height: 308px; background: #fff; border-left: 1px solid #aaa; border-top: 1px solid #aaa; }
.chart svg { display: block; }
.lbl { font: 11px Roboto, sans-serif; fill: #333; text-anchor: middle; }
.lbl.hr { font-size: 8px; }
.axis { font: 13.500px Roboto, sans-serif; fill: #333; text-anchor: middle; }
.opts-panel { height: 94px; padding: 8px 8px 0; flex: none; }
.info { height: 46px; background: #fdf4dc; border: 1px solid #c9c08a; display: flex; padding: 7px 0 0 6px; gap: 6px; }
.info-ic { width: 16px; height: 20px; flex: none; }
.info p { margin: 0; white-space: nowrap; line-height: 15px; letter-spacing: -.025px; }
.check { display: flex; align-items: center; margin-top: 12px; font-weight: 700; height: 15px; padding-left: 3px; gap: 3px; letter-spacing: .1px; }
.box { width: 13px; height: 13px; background: #fff; border: 1px solid #333; flex: none; }
.dlg-foot { height: 39px; background: #dedede; border-top: 1px solid #c8c8c8; display: flex; justify-content: space-between; align-items: flex-start; padding: 6px 7px 0 7px; flex: none; }
.btn { height: 25px; width: 58px; background: #e1e1e1; border: 2px solid #adadad; font: 12px Roboto, sans-serif; color: #1a1a1a; padding: 0; }
.btn.primary { width: 69px; border-color: #0078d7; }
```
FILE: chart.js
```js
(function () {
  var NS = 'http://www.w3.org/2000/svg';
  var X0 = 1027.67, BOT = 689.7, TOP = 471.3, L = 672.3, R = 1383.7;
  var svg = document.createElementNS(NS, 'svg');
  svg.setAttribute('width', 1103);
  svg.setAttribute('height', 307);
  svg.setAttribute('viewBox', '462 439 1103 307');
  function el(name, attrs, text) {
    var e = document.createElementNS(NS, name);
    for (var k in attrs) e.setAttribute(k, attrs[k]);
    if (text != null) e.textContent = text;
    svg.appendChild(e);
    return e;
  }
  function line(x1, y1, x2, y2, stroke, w, dash) {
    var a = { x1: x1, y1: y1, x2: x2, y2: y2, stroke: stroke, 'stroke-width': w || 1 };
    if (dash) a['stroke-dasharray'] = dash;
    return el('line', a);
  }
  // Points are read in 3x coordinates around the right half of the diagram.
  function rp(p) { return [1020 + p[0] / 3, 460 + p[1] / 3]; }
  function lp(p) { return [660 + p[0] / 3, 460 + p[1] / 3]; }
  function spline(pts) {
    var d = 'M' + pts[0][0].toFixed(1) + ' ' + pts[0][1].toFixed(1);
    for (var i = 0; i < pts.length - 1; i++) {
      var p0 = pts[i - 1] || pts[i], p1 = pts[i], p2 = pts[i + 1], p3 = pts[i + 2] || p2;
      d += 'C' + (p1[0] + (p2[0] - p0[0]) / 6).toFixed(1) + ' ' + (p1[1] + (p2[1] - p0[1]) / 6).toFixed(1) + ' ' +
        (p2[0] - (p3[0] - p1[0]) / 6).toFixed(1) + ' ' + (p2[1] - (p3[1] - p1[1]) / 6).toFixed(1) + ' ' +
        p2[0].toFixed(1) + ' ' + p2[1].toFixed(1);
    }
    return d;
  }

  // grid and frame
  var dash = '3 3';
  for (var g = -120; g <= 120; g += 30) line(X0 + g * 2.733, TOP, X0 + g * 2.733, BOT, '#c4c4c4', 1, dash);
  [TOP, 526.3, 580.7, 635].forEach(function (y) { line(L, y, R, y, '#c4c4c4', 1, dash); });
  line(L, TOP, L, BOT, '#c4c4c4', 1, dash);
  line(R, TOP, R, BOT, '#c4c4c4', 1, dash);
  for (var k = -26; k <= 26; k++) line(X0 + k * 13.6, BOT - 7, X0 + k * 13.6, BOT, '#cfcfcf');
  for (var j = 1; j < 16; j++) line(L, TOP + j * 13.62, L + 7, TOP + j * 13.62, '#cfcfcf');
  line(L, BOT, R, BOT, '#c6c6c6', 2);

  // sun paths
  var arcs = [
    [[23,90],[360,125],[563,200],[678,288],[767,383],[840,478],[912,568],[985,653],[1020,690]],
    [[23,190],[260,212],[440,272],[572,352],[670,442],[755,535],[832,630],[882,690]],
    [[23,280],[208,298],[370,350],[492,420],[596,503],[684,592],[765,690]],
    [[23,371],[178,386],[315,430],[432,491],[530,570],[618,655],[642,690]],
    [[23,473],[150,485],[268,521],[370,577],[460,643],[503,690]],
    [[360,125],[260,212],[208,298],[178,386],[150,485]],
    [[563,200],[440,272],[370,350],[315,430],[268,521]],
    [[678,288],[572,352],[492,420],[432,491],[370,577]],
    [[767,383],[670,442],[596,503],[530,570],[460,643]],
    [[840,478],[755,535],[684,592],[618,655],[580,690]],
    [[912,568],[832,630],[765,690]],
    [[985,653],[945,690]]
  ];
  var d = '', m = '';
  arcs.forEach(function (a) {
    var pts = a.map(rp);
    d += spline(pts);
    m += spline(pts.map(function (p) { return [2 * X0 - p[0], p[1]]; }));
  });
  el('path', { d: d + m, fill: 'none', stroke: '#2a2a2a', 'stroke-width': 1 });
  line(X0, 490, X0, 617.7, '#777', 1.6);

  // shaded obstacle
  var top = [[242,148],[283,143],[367,141],[430,142],[489,150],[572,163],[654,180],[736,205]].map(lp);
  var outline = spline(top) + 'L' + lp([736, 689]).join(' ') + 'L' + lp([242, 689]).join(' ') + 'Z';
  var defs = el('defs', {});
  var cp = document.createElementNS(NS, 'clipPath');
  cp.setAttribute('id', 'obstacle');
  var cpp = document.createElementNS(NS, 'path');
  cpp.setAttribute('d', outline);
  cp.appendChild(cpp);
  defs.appendChild(cp);
  var hatch = el('g', { 'clip-path': 'url(#obstacle)' });
  for (var x = 500; x < 920; x += 13.6) {
    var h = document.createElementNS(NS, 'line');
    h.setAttribute('x1', x); h.setAttribute('y1', 690);
    h.setAttribute('x2', x + 230); h.setAttribute('y2', 460);
    h.setAttribute('stroke', '#b4b4b4');
    hatch.appendChild(h);
  }
  [242,283,326,367,407,448,489,532,572,613,654,695,736].forEach(function (X) {
    var v = document.createElementNS(NS, 'line');
    var px = 660 + X / 3;
    v.setAttribute('x1', px); v.setAttribute('x2', px);
    v.setAttribute('y1', 460); v.setAttribute('y2', 690);
    v.setAttribute('stroke', '#1c1c1c');
    hatch.appendChild(v);
  });
  el('path', { d: outline, fill: 'none', stroke: '#2a2a2a', 'stroke-width': 1 });

  // sector and hour labels
  function labels(list, f, cls) {
    list.forEach(function (t) {
      var p = f([t[1], t[2]]);
      el('text', { x: p[0], y: p[1] + (cls === 'lbl' ? 4 : 3), class: cls }, t[0]);
    });
  }
  labels([['D 2',170,145],['D 4',411,197],['D 6',567,272],['D 8',675,361],['D 10',761,453],['D 12',836,547],['D 14',912,622],
    ['C 2',127,243],['C 4',318,280],['C 6',467,347],['C 8',580,428],['C 10',674,517],['C 12',755,612],['C 14',818,659],
    ['B 2',109,331],['B 4',266,364],['B 6',401,420],['B 8',512,495],['B 10',603,578],['B 12',684,642],
    ['A 2',89,439],['A 4',219,464],['A 6',335,512],['A 8',438,576],['A 10',515,627],['A 12',613,670]], rp, 'lbl');
  labels([['D 1',955,145],['D 3',715,197],['D 5',559,272],['D 7',451,361],['D 9',365,453],['D 11',285,547],['D 13',211,622],
    ['C 1',995,243],['C 3',807,280],['C 5',660,347],['C 7',543,428],['C 9',451,517],['C 11',367,612],['C 13',308,659],
    ['B 1',1018,331],['B 3',860,364],['B 5',728,420],['B 7',617,495],['B 9',523,578],['B 11',443,642],
    ['A 1',1033,439],['A 3',904,464],['A 5',789,512],['A 7',688,576],['A 9',611,627],['A 11',513,670]], lp, 'lbl');
  labels([['0 h',23,69],['1 h',385,104],['2 h',581,180],['3 h',700,272],['4 h',786,364],['5 h',862,458],['6 h',932,547],['7 h',1008,633]], rp, 'lbl hr');
  labels([['-1 h',737,104],['-2 h',540,180],['-3 h',420,272],['-4 h',333,364],['-5 h',262,458],['-6 h',188,547],['-7 h',115,633]], lp, 'lbl hr');

  // axes
  el('text', { x: 722, y: 451, class: 'axis' }, 'Elevation (°)');
  [[80,467],[60,521],[40,576],[20,630],[0,685]].forEach(function (a) {
    var t = el('text', { x: 659, y: a[1], class: 'axis' }, a[0]);
    t.style.textAnchor = 'end';
  });
  [-120,-90,-60,-30,0,30,60,90,120].forEach(function (v) {
    el('text', { x: X0 + v * 2.733, y: 713, class: 'axis' }, v);
  });
  el('text', { x: 1027, y: 737, class: 'axis' }, 'Solar azimuth (°)');

  document.getElementById('chart').appendChild(svg);
})();
```
